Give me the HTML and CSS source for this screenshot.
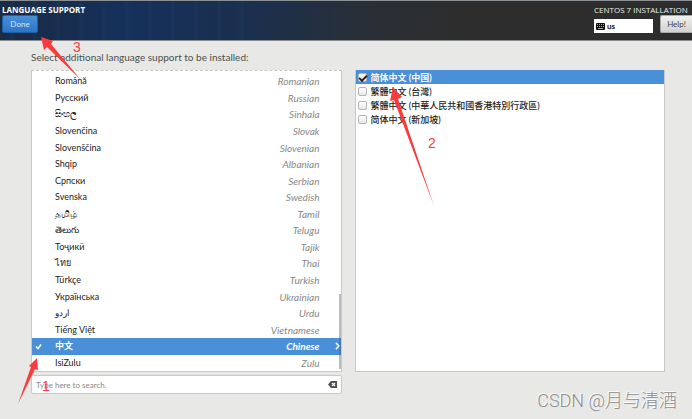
FILE: index.html
```html
<!DOCTYPE html>
<html lang="en">
<head>
  <meta charset="UTF-8">
  <meta name="viewport" content="width=device-width, initial-scale=1.0">
  <title>Language Support</title>
  <link rel="stylesheet" href="styles.css">
</head>
<body>
  <header class="header">
    <div class="header-left">
      <h1 class="title">LANGUAGE SUPPORT</h1>
      <button class="done">Done</button>
    </div>
    <div class="header-right">
      <div class="product">CENTOS 7 INSTALLATION</div>
      <div class="tools">
        <button class="keyboard">
          <svg width="9" height="7" viewBox="0 0 9 7">
            <rect width="9" height="7" rx="1" fill="#111"/>
            <path d="M1 1.5h7M1 3.5h7" stroke="#aaa" stroke-dasharray="1 1"/>
            <path d="M2 5.5h5" stroke="#aaa"/>
          </svg>
          us
        </button>
        <button class="help">Help!</button>
      </div>
    </div>
  </header>

  <main class="main">
    <p class="prompt">Select additional language support to be installed:</p>
    <div class="panels">
      <div class="left">
        <div class="box languages">
          <button class="language"><span>Română</span><i>Romanian</i></button>
          <button class="language"><span>Русский</span><i>Russian</i></button>
          <button class="language"><span>සිංහල</span><i>Sinhala</i></button>
          <button class="language"><span>Slovenčina</span><i>Slovak</i></button>
          <button class="language"><span>Slovenščina</span><i>Slovenian</i></button>
          <button class="language"><span>Shqip</span><i>Albanian</i></button>
          <button class="language"><span>Српски</span><i>Serbian</i></button>
          <button class="language"><span>Svenska</span><i>Swedish</i></button>
          <button class="language"><span>தமிழ்</span><i>Tamil</i></button>
          <button class="language"><span>తెలుగు</span><i>Telugu</i></button>
          <button class="language"><span>Тоҷикӣ</span><i>Tajik</i></button>
          <button class="language"><span>ไทย</span><i>Thai</i></button>
          <button class="language"><span>Türkçe</span><i>Turkish</i></button>
          <button class="language"><span>Українська</span><i>Ukrainian</i></button>
          <button class="language"><span>اردو</span><i>Urdu</i></button>
          <button class="language"><span>Tiếng Việt</span><i>Vietnamese</i></button>
          <button class="language selected">
            <svg class="tick" width="7" height="7" viewBox="0 0 7 7"><path d="M1 3.5l2 2 3-4" fill="none" stroke="#fff" stroke-width="1.6"/></svg>
            <span lang="zh">中文</span><i>Chinese</i>
            <svg class="chevron" width="6" height="8" viewBox="0 0 6 8"><path d="M1 1l3 3-3 3" fill="none" stroke="#fff" stroke-width="1.6"/></svg>
          </button>
          <button class="language"><span>IsiZulu</span><i>Zulu</i></button>
          <div class="scrollbar"></div>
        </div>
        <div class="box search">
          <input type="text" aria-label="Search languages" placeholder="Type here to search.">
          <button class="erase" aria-label="Clear">
            <svg width="9" height="7" viewBox="0 0 9 7">
              <path d="M0 3.5L3 0h6v7H3z" fill="#4a4f50"/>
              <path d="M4 2l3 3M7 2L4 5" stroke="#fff" stroke-width="1.2"/>
            </svg>
          </button>
        </div>
      </div>
      <div class="box locales" lang="zh">
        <label class="locale selected"><input type="checkbox" checked>简体中文 (中国)</label>
        <label class="locale"><input type="checkbox">繁體中文 (台灣)</label>
        <label class="locale"><input type="checkbox">繁體中文 (中華人民共和國香港特別行政區)</label>
        <label class="locale"><input type="checkbox">简体中文 (新加坡)</label>
      </div>
    </div>
  </main>

  <!-- step arrows drawn over the window -->
  <svg class="steps" viewBox="0 0 692 419">
    <path d="M41 37L53 41L51 44L81 80L47 47L44 50Z"/>
    <path d="M393 87L402 97L398 99L434 206L394 100L390 101Z"/>
    <path d="M37 358L38 370L35 369L18 404L31 367L29 366Z"/>
    <text x="73" y="52">3</text>
    <text x="428" y="148">2</text>
    <text x="42" y="391">1</text>
  </svg>
  <div class="watermark" lang="zh">CSDN @月与清酒</div>
</body>
</html>
```

FILE: styles.css
```css
* {
  box-sizing: border-box;
}

body {
  margin: 0;
  height: 100vh;
  display: flex;
  flex-direction: column;
  position: relative;
  overflow: hidden;
  background-color: #e8e8e6;
  color: #2e3436;
  font-family: Lato, "Open Sans", "Noto Sans", "Noto Sans CJK SC", sans-serif;
  font-size: 8px;
}

button,
input {
  font-family: inherit;
  font-size: inherit;
  color: inherit;
  margin: 0;
}

.header {
  display: flex;
  justify-content: space-between;
  height: 41px;
  padding-top: 3px;
  border-top: 1px solid #8a9094;
  border-bottom: 1px solid #8a8d90;
  background:
    repeating-linear-gradient(90deg, transparent 0 9px, rgba(90, 140, 200, 0.06) 12px, transparent 15px 23px),
    linear-gradient(90deg, #1a2b44, #15305a 18%, #1b2f4e 36%, #282f38 52%, #2d2d2d 66%);
  background-size: 260px 100%, 100% 100%;
  background-repeat: no-repeat;
}

.header-left {
  padding-left: 2px;
}

.title,
.product {
  margin: 0;
  font-family: "Open Sans", sans-serif;
  font-size: 8px;
  line-height: 11px;
  white-space: nowrap;
}

.title {
  color: #fff;
  font-weight: bold;
}

.done {
  width: 36px;
  height: 18px;
  padding: 0;
  border: 1px solid #1f5fa8;
  border-radius: 2px;
  background: linear-gradient(#4a90d9, #2a76c6);
  color: #d5e5f5;
  display: block;
}

.header-right {
  min-width: 98px;
  color: #eee;
}

.tools {
  display: flex;
  align-items: flex-end;
  justify-content: space-between;
}

.keyboard {
  display: flex;
  align-items: center;
  gap: 2px;
  width: 59px;
  height: 14px;
  padding: 0 2px;
  border: none;
  background-color: #fff;
  color: #111;
  font-weight: bold;
}

.help {
  width: 32px;
  height: 18px;
  padding: 0;
  border: 1px solid #aaa;
  border-right: none;
  border-radius: 2px 0 0 2px;
  background: linear-gradient(#f0f0f0, #d2d2d0);
  color: #444;
}

.main {
  flex: 1;
  display: flex;
  flex-direction: column;
  padding: 8px 27px 25px 31px;
}

.prompt {
  margin: 0 0 5px;
  color: #4a4f50;
  font-size: 10px;
  line-height: 16px;
}

.panels {
  flex: 1;
  display: grid;
  grid-template-columns: 1fr 1fr;
  gap: 13px;
}

.left {
  display: flex;
  flex-direction: column;
  gap: 3px;
}

.box {
  border: 1px solid #c8c9c7;
  background-color: #fff;
}

.languages {
  flex: 1;
  display: flex;
  flex-direction: column;
  position: relative;
  padding-top: 2px;
  border-top: 1px dashed #c8c9c7;
}

.language {
  flex: 1 0 0;
  display: flex;
  align-items: center;
  justify-content: space-between;
  position: relative;
  padding: 0 21px 0 23px;
  border: none;
  background: none;
  font-size: 9px;
  line-height: 12px;
  color: #222;
}

.language i {
  color: #888;
  font-size: 10px;
}

.language.selected,
.language.selected i {
  color: #fff;
  font-weight: bold;
}

.selected {
  background-color: #4a90d9;
}

.tick {
  position: absolute;
  left: 3px;
}

.chevron {
  position: absolute;
  right: 0;
}

.scrollbar {
  position: absolute;
  right: 0;
  bottom: 2px;
  width: 2px;
  height: 25%;
  background-color: rgba(80, 90, 90, 0.4);
}

.search {
  display: flex;
  align-items: center;
  height: 19px;
  padding: 0 4px;
  border-radius: 2px;
}

.search input {
  flex: 1;
  min-width: 0;
  padding: 0;
  border: none;
  outline: none;
  background: none;
}

.search input::placeholder {
  color: #888;
}

.erase {
  display: flex;
  padding: 0;
  border: none;
  background: none;
}

.locales {
  margin-bottom: 22px;
  border-top: none;
}

.locale {
  display: flex;
  align-items: center;
  gap: 4px;
  height: 14px;
  padding-left: 2px;
  color: #222;
  font-size: 9px;
  font-weight: 500;
}

.locale.selected {
  color: #fff;
  font-weight: bold;
}

.locale input {
  appearance: none;
  width: 9px;
  height: 9px;
  border: 1px solid #b4b4b4;
  border-radius: 2px;
  background: linear-gradient(#fff, #e8e8e8);
  display: grid;
  place-items: center;
}

.locale input:checked::after {
  content: "";
  width: 6px;
  height: 3px;
  border: solid #222;
  border-width: 0 0 2px 2px;
  transform: rotate(-45deg);
}

.steps {
  position: absolute;
  top: 0;
  left: 0;
  width: 100%;
  fill: #fb3b3b;
  font-family: "Liberation Sans", sans-serif;
  font-size: 14px;
  pointer-events: none;
}

.watermark {
  position: absolute;
  right: 15px;
  bottom: 6px;
  color: #8c8c8c;
  font-family: Roboto, "Noto Sans CJK SC", sans-serif;
  font-size: 18px;
  line-height: 24px;
  font-weight: 300;
  text-shadow: -1px -1px 0 #fff;
}
```
